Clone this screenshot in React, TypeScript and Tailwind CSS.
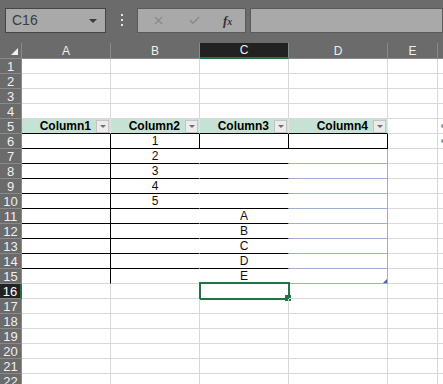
import React from 'react';
import { X, Check } from 'lucide-react';

const COLS = ['A', 'B', 'C', 'D', 'E', ''];
const ROWS = Array.from({ length: 22 }, (_, i) => i + 1);

const GRID = 'border-[#d9d9d9]';

function cellBorders(row: number, col: number): string {
  // col: 0=A .. 3=D, 4=E, 5=rest
  if (row === 5 && col <= 3) return 'border-r border-b border-r-[#e2e2e2] border-b-black bg-[#c6e2d4]';
  if (row === 6 && col <= 3) return 'border-r border-b border-black';
  if (row >= 7 && row <= 15 && col <= 3) {
    const bottom = row === 15 ? (col === 3 ? 'border-b-[#9eafd6]' : 'border-b-[#d9d9d9]') : col === 3 ? 'border-b-[#9eafd6]' : 'border-b-black';
    const right = col === 0 ? 'border-r-black' : col === 3 ? 'border-r-[#9eafd6]' : 'border-r-white';
    return `border-r border-b ${bottom} ${right}`;
  }
  return `border-r border-b ${GRID}`;
}

function FilterButton() {
  return (
    <span className="flex h-[13px] w-[13px] shrink-0 items-center justify-center border border-[#c4c4c4] bg-[#ececec]">
      <span className="h-0 w-0 border-x-[3px] border-t-[3px] border-x-transparent border-t-[#6f6f6f]" />
    </span>
  );
}

function Cell({ row, col }: { row: number; col: number }) {
  const cls = cellBorders(row, col);
  let content: React.ReactNode = null;

  if (row === 5 && col <= 3) {
    content = (
      <div className="flex h-full items-center justify-end gap-[5px] pr-[1px]">
        <span className="text-[12px] font-bold leading-none text-black">Column{col + 1}</span>
        <FilterButton />
      </div>
    );
  } else if (col === 1 && row >= 6 && row <= 10) {
    content = <div className="flex h-full items-center justify-center text-[12px] leading-none">{row - 5}</div>;
  } else if (col === 2 && row >= 11 && row <= 15) {
    content = (
      <div className="flex h-full items-center justify-center text-[12px] leading-none">
        {['A', 'B', 'C', 'D', 'E'][row - 11]}
      </div>
    );
  } else if (col === 5 && (row === 5 || row === 6)) {
    content = <span className="ml-[3px] mt-[5px] block h-[4px] w-[4px] rounded-full bg-[#8d97ab]" />;
  }

  return (
    <div className={`relative ${cls}`}>
      {content}
      {row === 15 && col === 3 && (
        <span className="absolute bottom-0 right-0 h-0 w-0 border-l-[4px] border-t-[4px] border-l-transparent border-t-transparent border-r-[4px] border-r-[#4a62a8]" />
      )}
      {row === 16 && col === 2 && (
        <>
          <span className="pointer-events-none absolute -left-[1px] -top-[2px] h-[18px] w-[91px] border-2 border-[#217346]" />
          <span className="absolute -bottom-[3px] -right-[3px] h-[6px] w-[6px] bg-[#217346]" />
        </>
      )}
    </div>
  );
}

export default function App() {
  return (
    <div className="h-[384px] w-[443px] overflow-hidden bg-white font-['Liberation_Sans',Arial,sans-serif] text-[#111]">
      {/* formula bar */}
      <div className="flex h-[43px] items-start bg-[#6b6b6b] pt-[8px]">
        <div className="ml-[5px] flex h-[25px] w-[101px] items-center justify-between border border-[#454545] bg-[#a9a9a9] pl-[6px] pr-[8px]">
          <span className="text-[14px] text-[#3c3c3c]">C16</span>
          <span className="h-0 w-0 border-x-[4px] border-t-[4px] border-x-transparent border-t-[#3a3a3a]" />
        </div>
        <div className="ml-[15px] mt-[6px] flex flex-col gap-[3px]">
          <span className="h-[2px] w-[2px] bg-[#e6e6e6]" />
          <span className="h-[2px] w-[2px] bg-[#e6e6e6]" />
          <span className="h-[2px] w-[2px] bg-[#e6e6e6]" />
        </div>
        <div className="ml-[14px] flex h-[25px] w-[109px] items-center border border-[#5a5a5a] bg-[#a9a9a9]">
          <X className="ml-[14px] h-[13px] w-[13px] text-[#888]" strokeWidth={2} />
          <Check className="ml-[23px] h-[13px] w-[13px] text-[#888]" strokeWidth={2.5} />
          <span className="ml-[22px] font-['Liberation_Serif',serif] text-[13px] font-bold italic text-[#333]">
            f<span className="text-[10px]">x</span>
          </span>
        </div>
        <div className="ml-[4px] h-[25px] flex-1 border border-[#5a5a5a] bg-[#a9a9a9]" />
      </div>

      {/* sheet */}
      <div className="grid grid-cols-[22px_89px_89px_89px_99px_50px_1fr] grid-rows-[16px_repeat(22,15px)]">
        <div className="relative border-r border-b border-[#8a8a8a] bg-[#6b6b6b]">
          <span className="absolute bottom-[3px] right-[3px] h-0 w-0 border-b-[7px] border-l-[7px] border-b-[#f0f0f0] border-l-transparent" />
        </div>
        {COLS.map((c, i) =>
          c === 'C' ? (
            <div key={c} className="flex items-center justify-center border-b-2 border-r border-b-[#217346] border-r-[#8a8a8a] bg-[#222] text-[12px] leading-none text-[#f2f2f2]">
              {c}
            </div>
          ) : (
            <div key={i} className="flex items-center justify-center border-b border-r border-[#8a8a8a] bg-[#6b6b6b] text-[12px] leading-none text-[#f0f0f0]">
              {c}
            </div>
          )
        )}
        {ROWS.map((r) => (
          <React.Fragment key={r}>
            <div
              className={
                r === 16
                  ? 'flex items-center justify-center border-b border-r-2 border-b-[#8a8a8a] border-r-[#217346] bg-[#222] text-[13px] leading-none text-white'
                  : 'flex items-center justify-center border-b border-r border-[#8a8a8a] bg-[#6b6b6b] text-[13px] leading-none text-[#f0f0f0]'
              }
            >
              {r}
            </div>
            {COLS.map((_, ci) => (
              <Cell key={ci} row={r} col={ci} />
            ))}
          </React.Fragment>
        ))}
      </div>
    </div>
  );
}
